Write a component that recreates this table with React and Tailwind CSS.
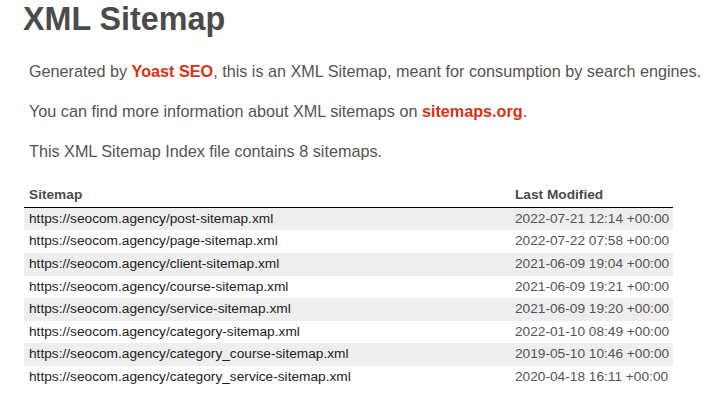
import React from "react";

const SITEMAPS = [
  { loc: "https://seocom.agency/post-sitemap.xml", mod: "2022-07-21 12:14 +00:00" },
  { loc: "https://seocom.agency/page-sitemap.xml", mod: "2022-07-22 07:58 +00:00" },
  { loc: "https://seocom.agency/client-sitemap.xml", mod: "2021-06-09 19:04 +00:00" },
  { loc: "https://seocom.agency/course-sitemap.xml", mod: "2021-06-09 19:21 +00:00" },
  { loc: "https://seocom.agency/service-sitemap.xml", mod: "2021-06-09 19:20 +00:00" },
  { loc: "https://seocom.agency/category-sitemap.xml", mod: "2022-01-10 08:49 +00:00" },
  { loc: "https://seocom.agency/category_course-sitemap.xml", mod: "2019-05-10 10:46 +00:00" },
  { loc: "https://seocom.agency/category_service-sitemap.xml", mod: "2020-04-18 16:11 +00:00" }
];

export default function App() {
  return (
    <div className="min-h-[403px] w-[703px] bg-white font-['Liberation_Sans',Arial,sans-serif] text-[#545353] overflow-hidden">
      {/* Header */}
      <h1 className="pt-[3px] pl-[23px] text-[32.3px] leading-[32.3px] font-bold text-[#4b4b4b] whitespace-nowrap">
        XML Sitemap
      </h1>

      {/* Intro */}
      <div className="mt-[26px] pl-[29px] text-[16.2px] leading-[20px] whitespace-nowrap">
        <p>
          Generated by{" "}
          <a href="#" className="font-bold text-[#da3114]">Yoast SEO</a>
          , this is an XML Sitemap, meant for consumption by search engines.
        </p>
        <p className="mt-[20px]">
          You can find more information about XML sitemaps on{" "}
          <a href="#" className="font-bold text-[#da3114]">sitemaps.org</a>.
        </p>
        <p className="mt-[20px]">This XML Sitemap Index file contains 8 sitemaps.</p>
      </div>

      {/* Table */}
      <div className="mt-[22px] ml-[24px] w-[649px] text-[13.7px] leading-[15.6px]">
        <div className="grid grid-cols-[486px_163px] border-b border-black font-bold text-[#4a4a4a]">
          <div className="pl-[5px] pt-[4px] pb-[4px]">Sitemap</div>
          <div className="pl-[5px] pt-[4px] pb-[4px]">Last Modified</div>
        </div>
        {SITEMAPS.map((s, i) => (
          <div
            key={s.loc}
            className={`grid grid-cols-[486px_163px] whitespace-nowrap ${i % 2 === 0 ? "bg-[#eeeeee]" : "bg-white"}`}
          >
            <div className="pl-[5px] pt-[3px] pb-[4px]">
              <a href="#" className="text-[#222222]">{s.loc}</a>
            </div>
            <div className="pl-[5px] pt-[3px] pb-[4px]">{s.mod}</div>
          </div>
        ))}
      </div>
    </div>
  );
}
